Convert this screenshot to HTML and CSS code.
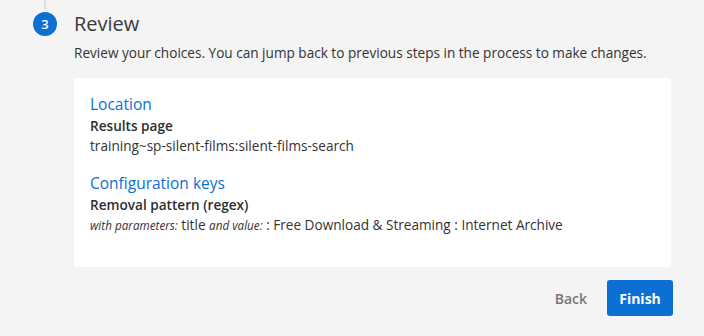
FILE: index.html
```html
<!DOCTYPE html>
<html>
<head>
<meta charset="utf-8">
<link rel="stylesheet" href="styles.css">
</head>
<body>
<div class="step">
  <div class="rail">
    <div class="rail-line"></div>
    <div class="badge">3</div>
  </div>
  <div class="content">
    <h2 class="title">Review</h2>
    <p class="desc">Review your choices. You can jump back to previous steps in the process to make changes.</p>
    <div class="card">
      <div class="section">
        <div class="sec-title">Location</div>
        <div class="label">Results page</div>
        <div class="value">training~sp-silent-films:silent-films-search</div>
      </div>
      <div class="section">
        <div class="sec-title">Configuration keys</div>
        <div class="label">Removal pattern (regex)</div>
        <div class="value"><em class="meta">with parameters:</em> title <em class="meta">and value:</em> : Free Download &amp; Streaming : Internet Archive</div>
      </div>
    </div>
    <div class="actions">
      <button class="btn-back">Back</button>
      <button class="btn-finish">Finish</button>
    </div>
  </div>
</div>
</body>
</html>
```
FILE: styles.css
```css
html, body {
  margin: 0;
  padding: 0;
  background: #f4f4f4;
  font-family: "Open Sans", "Noto Sans", sans-serif;
  color: #333;
}
.step {
  display: flex;
  padding-left: 33px;
  width: 640px;
}
.rail {
  width: 41px;
  flex: none;
  display: flex;
  flex-direction: column;
}
.rail-line {
  width: 2px;
  height: 9px;
  margin-left: 11px;
  background: #dcdcdc;
}
.badge {
  margin-top: 3px;
  width: 24px;
  height: 24px;
  border-radius: 50%;
  background: #0b6fd3;
  color: #fff;
  font-size: 13px;
  font-weight: 600;
  line-height: 24px;
  text-align: center;
}
.content {
  flex: 1;
  padding-top: 10px;
}
.title {
  margin: 0;
  font-size: 20px;
  font-weight: 500;
  line-height: 28px;
  color: #3a3a3a;
}
.desc {
  margin: 5px 0 0;
  font-size: 13.6px;
  line-height: 20px;
  color: #333;
}
.card {
  margin-top: 15px;
  width: 597px;
  height: 189px;
  box-sizing: border-box;
  background: #fff;
  border-radius: 3px;
  padding: 15px 16px;
}
.section + .section {
  margin-top: 16px;
}
.sec-title {
  font-size: 15.5px;
  line-height: 22px;
  color: #0b6fd3;
}
.label {
  font-size: 13.6px;
  font-weight: 600;
  line-height: 21px;
  color: #2e2e2e;
}
.value {
  font-size: 13.6px;
  line-height: 20px;
  color: #333;
}
.meta {
  font-size: 11.7px;
  font-style: italic;
}
.actions {
  display: flex;
  justify-content: flex-end;
  align-items: center;
  gap: 20px;
  margin-top: 13px;
  width: 599px;
}
.btn-back {
  background: none;
  border: none;
  padding: 0;
  font-family: inherit;
  font-size: 14px;
  font-weight: 600;
  color: #777;
}
.btn-finish {
  width: 66px;
  height: 36px;
  background: #0b6fd3;
  border: none;
  border-radius: 3px;
  color: #fff;
  font-family: inherit;
  font-size: 14px;
  font-weight: 700;
}
```
